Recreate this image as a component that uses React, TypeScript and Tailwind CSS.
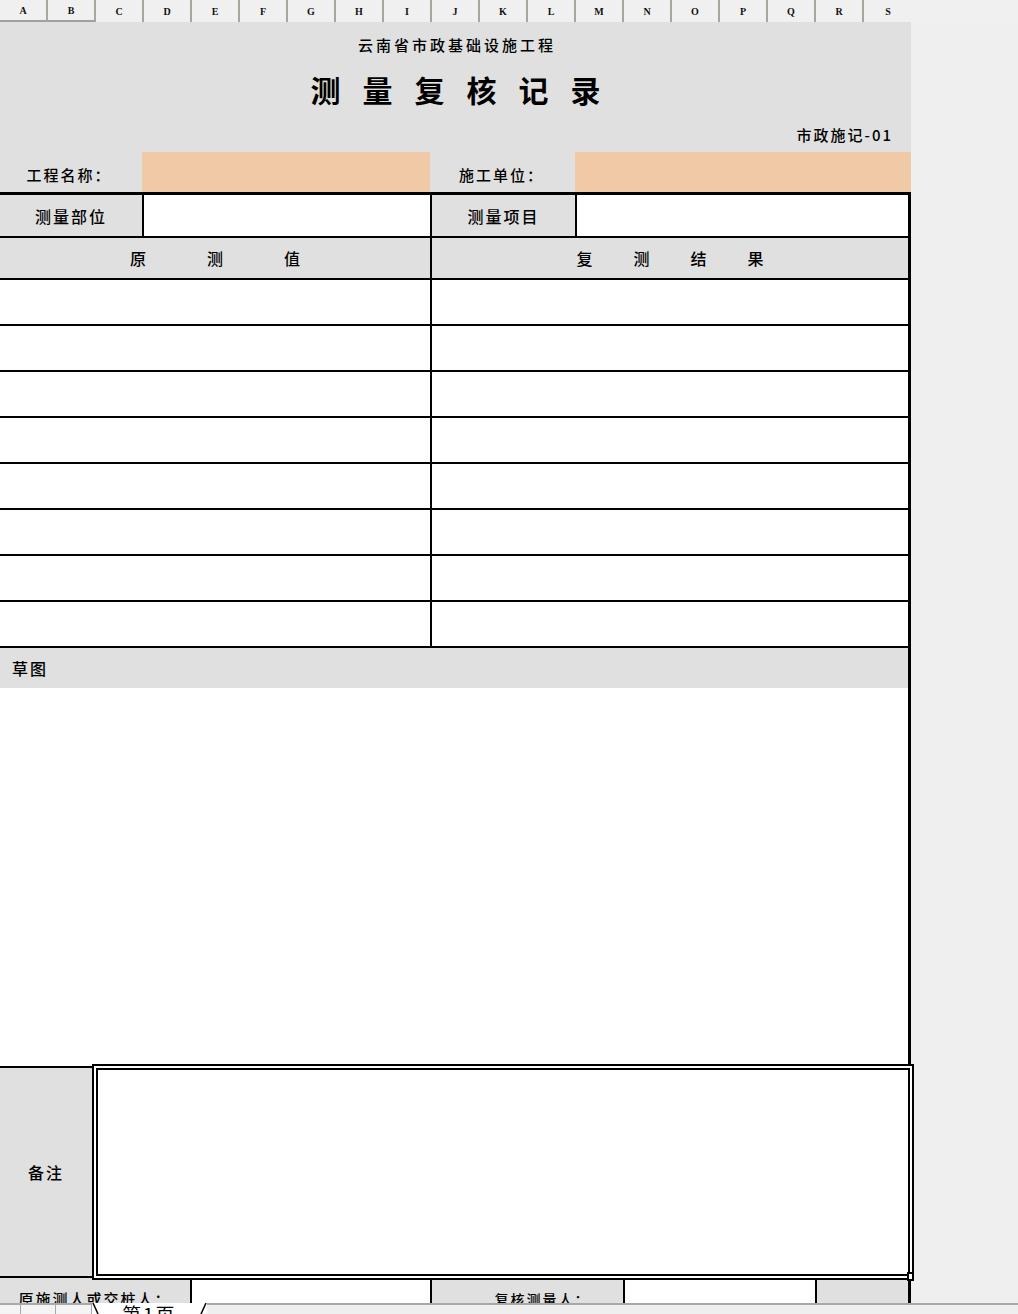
const cols = ["A", "B", "C", "D", "E", "F", "G", "H", "I", "J", "K", "L", "M", "N", "O", "P", "Q", "R", "S"];

export default function App() {
  return (
    <div className="relative h-[1314px] w-[1018px] overflow-hidden bg-[#efefef] font-['Noto_Sans_CJK_SC',sans-serif] text-black">
      {/* column letters */}
      <div className="flex h-[22px] bg-[#f0f0f0]">
        {cols.map((c, i) => (
          <div
            key={c}
            className={`flex w-[48px] items-center justify-center font-['Liberation_Serif',serif] text-[10px] font-bold text-[#111] ${
              i < 18 ? "border-r-2 border-[#aaa69e]" : ""
            } ${i < 2 ? "border-b-2 border-b-[#a0a0a0]" : ""}`}
          >
            {c}
          </div>
        ))}
      </div>

      {/* sheet */}
      <div className="w-[911px] bg-[#e0e0e0] font-medium">
        <div className="flex h-[46px] items-center justify-center pl-[3px] text-[15px] tracking-[3px]">
          云南省市政基础设施工程
        </div>
        <div className="flex h-[46px] items-center justify-center gap-[22px] pb-[4px] text-[30px] font-bold">
          {"测量复核记录".split("").map((ch) => (
            <span key={ch}>{ch}</span>
          ))}
        </div>
        <div className="flex h-[38px] items-center justify-end pt-[4px] pr-[18px] text-[15px] tracking-[2px]">
          市政施记-01
        </div>
        <div className="flex h-[40px] text-[15px] tracking-[2px]">
          <div className="flex w-[142px] items-center justify-center pt-[6px] pr-[4px]">工程名称：</div>
          <div className="w-[288px] bg-[#f0caa6]" />
          <div className="flex w-[145px] items-center justify-center pt-[6px] pr-[2px]">施工单位：</div>
          <div className="flex-1 bg-[#f0caa6]" />
        </div>

        {/* bordered table */}
        <div className="border-t-[3px] border-r-[3px] border-black">
          <div className="flex h-[41px] text-[16px] tracking-[2px]">
            <div className="flex w-[142px] items-center justify-center">测量部位</div>
            <div className="w-[288px] border-l-2 border-black bg-white" />
            <div className="flex w-[145px] items-center justify-center border-l-2 border-black">测量项目</div>
            <div className="flex-1 border-l-2 border-black bg-white" />
          </div>
          <div className="flex h-[42px] border-t-2 border-black text-[16px]">
            <div className="flex w-[430px] items-center justify-center gap-[61px]">
              <span>原</span>
              <span>测</span>
              <span>值</span>
            </div>
            <div className="flex flex-1 items-center justify-center gap-[41px] border-l-2 border-black">
              <span>复</span>
              <span>测</span>
              <span>结</span>
              <span>果</span>
            </div>
          </div>
          {Array.from({ length: 8 }).map((_, i) => (
            <div key={i} className="flex h-[46px] border-t-2 border-black bg-white">
              <div className="w-[430px]" />
              <div className="flex-1 border-l-2 border-black" />
            </div>
          ))}
          <div className="flex h-[42px] items-center border-t-2 border-black pl-[12px] text-[16px] tracking-[2px]">
            草图
          </div>
          <div className="h-[376px] bg-white" />
        </div>

        {/* remarks */}
        <div className="flex h-[216px] w-[914px] items-start bg-white">
          <div className="mt-[2px] flex h-[214px] w-[92px] flex-col border-t-2 border-black bg-[#e0e0e0] pb-[2px]">
            <div className="flex flex-1 items-center justify-center text-[16px] tracking-[2px]">备注</div>
            <div className="h-[2px] bg-black" />
          </div>
          <div className="h-[216px] w-[822px] border-2 border-black bg-white p-[2px]">
            <div className="h-full border-2 border-black bg-white" />
          </div>
        </div>

        {/* signatures */}
        <div className="flex h-[23px] overflow-hidden border-r-[3px] border-black text-[15px]">
          <div className="flex w-[190px] justify-center pt-[11px] leading-[16px] tracking-[2px]">原施测人或交桩人：</div>
          <div className="w-[240px] border-l-2 border-black bg-white" />
          <div className="flex w-[193px] justify-center border-l-2 border-black pt-[11px] pl-[30px] text-[14px] leading-[16px] tracking-[2px]">
            复核测量人：
          </div>
          <div className="w-[192px] border-l-2 border-black bg-white" />
          <div className="flex-1 border-l-2 border-black" />
        </div>
      </div>

      {/* sheet tabs */}
      <div className="flex h-[11px]">
        <div className="w-[21px] border-t-2 border-r border-[#a8a8a8] bg-[#f4f4f4]" />
        <div className="w-[35px] border-t-2 border-r border-[#a8a8a8] bg-[#f4f4f4]" />
        <div className="w-[36px] border-t-2 border-r border-[#a8a8a8] bg-[#f4f4f4]" />
        <div className="relative w-[115px] overflow-hidden bg-white">
          <svg className="absolute inset-0" width="115" height="11" viewBox="0 0 115 11">
            <line x1="1" y1="0" x2="6" y2="11" stroke="#000" strokeWidth="1.5" />
            <line x1="114" y1="0" x2="109" y2="11" stroke="#000" strokeWidth="1.5" />
          </svg>
          <div className="pl-[30px] text-[19px] leading-[22px] tracking-[2px]">第1页</div>
        </div>
        <div className="flex-1 border-t-2 border-[#a8a8a8] bg-[#efefef]" />
      </div>

      {/* selection handle */}
      <div className="absolute left-[907px] top-[1272px] h-[9px] w-[7px] border-2 border-black bg-white" />
    </div>
  );
}
